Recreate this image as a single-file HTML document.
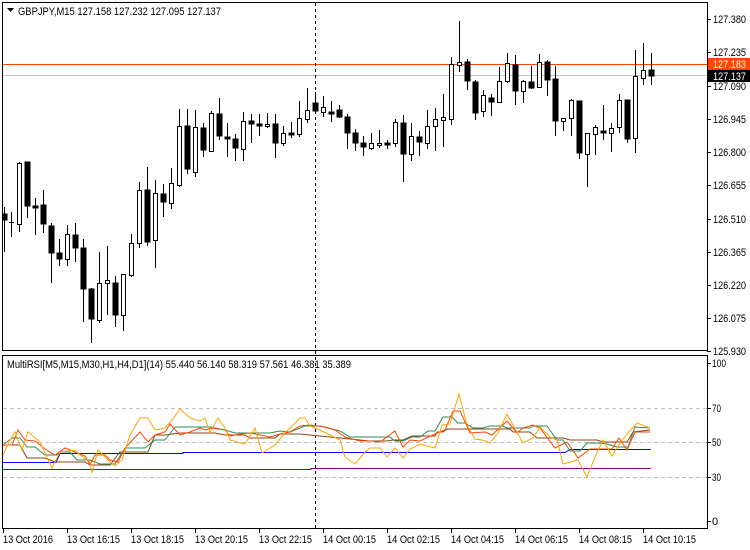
<!DOCTYPE html>
<html><head><meta charset="utf-8"><style>
html,body{margin:0;padding:0;background:#fff;width:750px;height:550px;overflow:hidden}
svg{display:block}
text{font-family:"Liberation Sans",sans-serif;font-size:11px;fill:#000}
</style></head><body>
<svg width="750" height="550" viewBox="0 0 750 550" xmlns="http://www.w3.org/2000/svg">
<rect width="750" height="550" fill="#fff"/>
<g fill="none" stroke="#000" shape-rendering="crispEdges">
<rect x="2.5" y="2.5" width="705" height="348"/>
<rect x="2.5" y="355.5" width="705" height="173"/>
</g>
<line x1="3" y1="64.5" x2="707" y2="64.5" stroke="#ff4500" shape-rendering="crispEdges"/>
<line x1="3" y1="75.5" x2="707" y2="75.5" stroke="#c0c0c0" shape-rendering="crispEdges"/>
<g stroke="#000" stroke-width="1" shape-rendering="crispEdges">
<line x1="4.5" y1="207" x2="4.5" y2="252"/><rect x="3" y="214" width="4" height="6" fill="#000"/>
<line x1="11.5" y1="212" x2="11.5" y2="237"/><line x1="9" y1="222.5" x2="14" y2="222.5"/>
<line x1="19.5" y1="162" x2="19.5" y2="232"/><rect x="17.5" y="163.5" width="4" height="61" fill="#fff"/>
<line x1="27.5" y1="162" x2="27.5" y2="218"/><rect x="25" y="162" width="5" height="44" fill="#000"/>
<line x1="35.5" y1="198" x2="35.5" y2="235"/><rect x="33" y="206" width="5" height="2" fill="#000"/>
<line x1="43.5" y1="190" x2="43.5" y2="233"/><rect x="41" y="205" width="5" height="19" fill="#000"/>
<line x1="51.5" y1="223" x2="51.5" y2="283"/><rect x="49" y="226" width="5" height="27" fill="#000"/>
<line x1="59.5" y1="239" x2="59.5" y2="266"/><rect x="57" y="253" width="5" height="6" fill="#000"/>
<line x1="67.5" y1="225" x2="67.5" y2="266"/><rect x="65.5" y="234.5" width="4" height="25" fill="#fff"/>
<line x1="75.5" y1="223" x2="75.5" y2="262"/><rect x="73" y="235" width="5" height="13" fill="#000"/>
<line x1="83.5" y1="239" x2="83.5" y2="322"/><rect x="81" y="248" width="5" height="41" fill="#000"/>
<line x1="91.5" y1="288" x2="91.5" y2="343"/><rect x="89" y="289" width="5" height="30" fill="#000"/>
<line x1="99.5" y1="252" x2="99.5" y2="323"/><rect x="97.5" y="283.5" width="4" height="37" fill="#fff"/>
<line x1="107.5" y1="246" x2="107.5" y2="315"/><rect x="105.5" y="280.5" width="4" height="3" fill="#fff"/>
<line x1="115.5" y1="276" x2="115.5" y2="327"/><rect x="113" y="283" width="5" height="32" fill="#000"/>
<line x1="123.5" y1="274" x2="123.5" y2="331"/><rect x="121.5" y="274.5" width="4" height="41" fill="#fff"/>
<line x1="131.5" y1="234" x2="131.5" y2="277"/><rect x="129.5" y="243.5" width="4" height="32" fill="#fff"/>
<line x1="139.5" y1="182" x2="139.5" y2="248"/><rect x="137.5" y="190.5" width="4" height="53" fill="#fff"/>
<line x1="147.5" y1="167" x2="147.5" y2="246"/><rect x="145" y="190" width="5" height="52" fill="#000"/>
<line x1="155.5" y1="180" x2="155.5" y2="268"/><rect x="153.5" y="193.5" width="4" height="47" fill="#fff"/>
<line x1="163.5" y1="184" x2="163.5" y2="217"/><rect x="161" y="194" width="5" height="8" fill="#000"/>
<line x1="171.5" y1="168" x2="171.5" y2="209"/><rect x="169.5" y="183.5" width="4" height="20" fill="#fff"/>
<line x1="179.5" y1="109" x2="179.5" y2="187"/><rect x="177.5" y="126.5" width="4" height="59" fill="#fff"/>
<line x1="187.5" y1="109" x2="187.5" y2="174"/><rect x="185" y="126" width="5" height="43" fill="#000"/>
<line x1="195.5" y1="110" x2="195.5" y2="177"/><rect x="193.5" y="127.5" width="4" height="45" fill="#fff"/>
<line x1="203.5" y1="123" x2="203.5" y2="157"/><rect x="201" y="128" width="5" height="22" fill="#000"/>
<line x1="211.5" y1="111" x2="211.5" y2="151"/><rect x="209.5" y="113.5" width="4" height="38" fill="#fff"/>
<line x1="219.5" y1="98" x2="219.5" y2="140"/><rect x="217" y="114" width="5" height="22" fill="#000"/>
<line x1="227.5" y1="123" x2="227.5" y2="157"/><rect x="225" y="137" width="5" height="2" fill="#000"/>
<line x1="235.5" y1="134" x2="235.5" y2="161"/><rect x="233" y="139" width="5" height="9" fill="#000"/>
<line x1="243.5" y1="112" x2="243.5" y2="161"/><rect x="241.5" y="121.5" width="4" height="28" fill="#fff"/>
<line x1="251.5" y1="114" x2="251.5" y2="143"/><rect x="249" y="121" width="5" height="3" fill="#000"/>
<line x1="259.5" y1="114" x2="259.5" y2="136"/><rect x="257" y="124" width="5" height="2" fill="#000"/>
<line x1="267.5" y1="113" x2="267.5" y2="128"/><rect x="265.5" y="124.5" width="4" height="2" fill="#fff"/>
<line x1="275.5" y1="114" x2="275.5" y2="158"/><rect x="273" y="124" width="5" height="19" fill="#000"/>
<line x1="283.5" y1="126" x2="283.5" y2="146"/><rect x="281.5" y="133.5" width="4" height="10" fill="#fff"/>
<line x1="291.5" y1="122" x2="291.5" y2="138"/><rect x="289" y="133" width="5" height="2" fill="#000"/>
<line x1="299.5" y1="101" x2="299.5" y2="137"/><rect x="297.5" y="118.5" width="4" height="16" fill="#fff"/>
<line x1="307.5" y1="88" x2="307.5" y2="123"/><rect x="305.5" y="110.5" width="4" height="9" fill="#fff"/>
<line x1="315.5" y1="92" x2="315.5" y2="111"/><rect x="313" y="103" width="5" height="8" fill="#000"/>
<line x1="323.5" y1="96" x2="323.5" y2="117"/><rect x="321.5" y="107.5" width="4" height="5" fill="#fff"/>
<line x1="331.5" y1="101" x2="331.5" y2="122"/><rect x="329" y="112" width="5" height="2" fill="#000"/>
<line x1="339.5" y1="105" x2="339.5" y2="118"/><rect x="337" y="110" width="5" height="7" fill="#000"/>
<line x1="347.5" y1="114" x2="347.5" y2="149"/><rect x="345" y="117" width="5" height="16" fill="#000"/>
<line x1="355.5" y1="129" x2="355.5" y2="151"/><rect x="353" y="133" width="5" height="10" fill="#000"/>
<line x1="363.5" y1="136" x2="363.5" y2="156"/><rect x="361" y="143" width="5" height="4" fill="#000"/>
<line x1="371.5" y1="133" x2="371.5" y2="150"/><rect x="369.5" y="143.5" width="4" height="5" fill="#fff"/>
<line x1="379.5" y1="130" x2="379.5" y2="148"/><rect x="377.5" y="143.5" width="4" height="2" fill="#fff"/>
<line x1="387.5" y1="140" x2="387.5" y2="149"/><rect x="385" y="143" width="5" height="2" fill="#000"/>
<line x1="395.5" y1="119" x2="395.5" y2="147"/><rect x="393.5" y="122.5" width="4" height="21" fill="#fff"/>
<line x1="403.5" y1="115" x2="403.5" y2="182"/><rect x="401" y="123" width="5" height="31" fill="#000"/>
<line x1="411.5" y1="123" x2="411.5" y2="161"/><rect x="409.5" y="136.5" width="4" height="18" fill="#fff"/>
<line x1="419.5" y1="131" x2="419.5" y2="156"/><rect x="417" y="137" width="5" height="5" fill="#000"/>
<line x1="427.5" y1="110" x2="427.5" y2="149"/><rect x="425.5" y="126.5" width="4" height="17" fill="#fff"/>
<line x1="435.5" y1="108" x2="435.5" y2="151"/><rect x="433.5" y="119.5" width="4" height="7" fill="#fff"/>
<line x1="443.5" y1="94" x2="443.5" y2="147"/><rect x="441.5" y="117.5" width="4" height="3" fill="#fff"/>
<line x1="451.5" y1="57" x2="451.5" y2="125"/><rect x="449.5" y="64.5" width="4" height="55" fill="#fff"/>
<line x1="459.5" y1="21" x2="459.5" y2="72"/><rect x="457.5" y="62.5" width="4" height="3" fill="#fff"/>
<line x1="467.5" y1="59" x2="467.5" y2="90"/><rect x="465" y="62" width="5" height="19" fill="#000"/>
<line x1="475.5" y1="80" x2="475.5" y2="120"/><rect x="473" y="82" width="5" height="31" fill="#000"/>
<line x1="483.5" y1="90" x2="483.5" y2="117"/><rect x="481.5" y="95.5" width="4" height="16" fill="#fff"/>
<line x1="491.5" y1="94" x2="491.5" y2="116"/><rect x="489" y="98" width="5" height="4" fill="#000"/>
<line x1="499.5" y1="67" x2="499.5" y2="102"/><rect x="497.5" y="81.5" width="4" height="21" fill="#fff"/>
<line x1="507.5" y1="53" x2="507.5" y2="83"/><rect x="505.5" y="63.5" width="4" height="18" fill="#fff"/>
<line x1="515.5" y1="55" x2="515.5" y2="105"/><rect x="513" y="65" width="5" height="26" fill="#000"/>
<line x1="523.5" y1="80" x2="523.5" y2="103"/><rect x="521.5" y="81.5" width="4" height="10" fill="#fff"/>
<line x1="531.5" y1="66" x2="531.5" y2="89"/><rect x="529" y="82" width="5" height="6" fill="#000"/>
<line x1="539.5" y1="54" x2="539.5" y2="87"/><rect x="537.5" y="62.5" width="4" height="25" fill="#fff"/>
<line x1="547.5" y1="60" x2="547.5" y2="96"/><rect x="545" y="62" width="5" height="18" fill="#000"/>
<line x1="555.5" y1="66" x2="555.5" y2="136"/><rect x="553" y="79" width="5" height="42" fill="#000"/>
<line x1="563.5" y1="118" x2="563.5" y2="131"/><rect x="561.5" y="118.5" width="4" height="3" fill="#fff"/>
<line x1="571.5" y1="99" x2="571.5" y2="136"/><rect x="569.5" y="100.5" width="4" height="18" fill="#fff"/>
<line x1="579.5" y1="101" x2="579.5" y2="159"/><rect x="577" y="101" width="5" height="52" fill="#000"/>
<line x1="587.5" y1="133" x2="587.5" y2="187"/><rect x="585.5" y="133.5" width="4" height="21" fill="#fff"/>
<line x1="595.5" y1="125" x2="595.5" y2="155"/><rect x="593.5" y="127.5" width="4" height="7" fill="#fff"/>
<line x1="603.5" y1="105" x2="603.5" y2="140"/><rect x="601" y="131" width="5" height="2" fill="#000"/>
<line x1="611.5" y1="123" x2="611.5" y2="152"/><rect x="609.5" y="128.5" width="4" height="5" fill="#fff"/>
<line x1="619.5" y1="94" x2="619.5" y2="133"/><rect x="617.5" y="100.5" width="4" height="27" fill="#fff"/>
<line x1="627.5" y1="100" x2="627.5" y2="143"/><rect x="625" y="100" width="5" height="39" fill="#000"/>
<line x1="635.5" y1="50" x2="635.5" y2="153"/><rect x="633.5" y="76.5" width="4" height="62" fill="#fff"/>
<line x1="643.5" y1="43" x2="643.5" y2="85"/><rect x="641.5" y="70.5" width="4" height="8" fill="#fff"/>
<line x1="651.5" y1="53" x2="651.5" y2="85"/><rect x="649" y="70" width="5" height="6" fill="#000"/>
</g>
<line x1="315.5" y1="3" x2="315.5" y2="528" stroke="#000" stroke-dasharray="3,3" shape-rendering="crispEdges"/>
<polygon points="7,8 14,8 10.5,12" fill="#000"/>
<text x="18" y="15" textLength="203" lengthAdjust="spacingAndGlyphs">GBPJPY,M15  127.158 127.232 127.095 127.137</text>
<g stroke="#000" shape-rendering="crispEdges">
<line x1="707" y1="19.5" x2="711" y2="19.5"/><line x1="707" y1="52.5" x2="711" y2="52.5"/><line x1="707" y1="86.5" x2="711" y2="86.5"/><line x1="707" y1="119.5" x2="711" y2="119.5"/><line x1="707" y1="152.5" x2="711" y2="152.5"/><line x1="707" y1="185.5" x2="711" y2="185.5"/><line x1="707" y1="219.5" x2="711" y2="219.5"/><line x1="707" y1="252.5" x2="711" y2="252.5"/><line x1="707" y1="285.5" x2="711" y2="285.5"/><line x1="707" y1="318.5" x2="711" y2="318.5"/><line x1="707" y1="351.5" x2="711" y2="351.5"/>
</g>
<g>
<text x="713" y="23" textLength="33" lengthAdjust="spacingAndGlyphs">127.380</text><text x="713" y="56" textLength="33" lengthAdjust="spacingAndGlyphs">127.235</text><text x="713" y="90" textLength="33" lengthAdjust="spacingAndGlyphs">127.090</text><text x="713" y="123" textLength="33" lengthAdjust="spacingAndGlyphs">126.945</text><text x="713" y="156" textLength="33" lengthAdjust="spacingAndGlyphs">126.800</text><text x="713" y="189" textLength="33" lengthAdjust="spacingAndGlyphs">126.655</text><text x="713" y="223" textLength="33" lengthAdjust="spacingAndGlyphs">126.510</text><text x="713" y="256" textLength="33" lengthAdjust="spacingAndGlyphs">126.365</text><text x="713" y="289" textLength="33" lengthAdjust="spacingAndGlyphs">126.220</text><text x="713" y="322" textLength="33" lengthAdjust="spacingAndGlyphs">126.075</text><text x="713" y="355" textLength="33" lengthAdjust="spacingAndGlyphs">125.930</text>
</g>
<rect x="708" y="58" width="42" height="12" fill="#ff4500"/>
<text x="713" y="68" style="fill:#fff" textLength="33" lengthAdjust="spacingAndGlyphs">127.183</text>
<rect x="708" y="70" width="42" height="12" fill="#000"/>
<text x="713" y="80" style="fill:#fff" textLength="33" lengthAdjust="spacingAndGlyphs">127.137</text>
<text x="7" y="368" textLength="344" lengthAdjust="spacingAndGlyphs">MultiRSI[M5,M15,M30,H1,H4,D1](14) 55.440 56.140 58.319 57.561 46.381 35.389</text>
<g stroke="#c0c0c0" stroke-dasharray="4,3" shape-rendering="crispEdges">
<line x1="3" y1="408.5" x2="707" y2="408.5"/><line x1="3" y1="442.5" x2="707" y2="442.5"/><line x1="3" y1="477.5" x2="707" y2="477.5"/>
</g>
<g stroke="#000" shape-rendering="crispEdges">
<line x1="707" y1="363.5" x2="711" y2="363.5"/><line x1="707" y1="408.5" x2="711" y2="408.5"/><line x1="707" y1="442.5" x2="711" y2="442.5"/><line x1="707" y1="477.5" x2="711" y2="477.5"/><line x1="707" y1="521.5" x2="711" y2="521.5"/>
</g>
<text x="712" y="367" textLength="14" lengthAdjust="spacingAndGlyphs">100</text><text x="712" y="412" textLength="9" lengthAdjust="spacingAndGlyphs">70</text><text x="712" y="446" textLength="9" lengthAdjust="spacingAndGlyphs">50</text><text x="712" y="481" textLength="9" lengthAdjust="spacingAndGlyphs">30</text><text x="712" y="525">0</text>
<g fill="none" stroke-width="1">
<polyline stroke="#800080" points="3,469.5 311,469.5 311,468.5 651,468.5"/>
<polyline stroke="#0000ff" points="3,462.5 56,462.5 60,453.5 183,453.5 183,452.5 565,452.5 570,449.5 651,449.5"/>
<polyline stroke="#8b4513" points="3,445 20,445 27,458 45,458 55,462 85,462 90,465 110,465 120,452 148,452 155,435 165,435 180,433 215,433 225,435 245,435 250,438 275,438 280,434 300,434 310,435 350,439 370,441 387,441 393,440 403,440 412,436 435,436 437,432 443,432 447,429 510,429 513,432 530,432 537,438 563,438 570,440 597,440 603,442 627,442 633,432 650,430"/>
<polyline stroke="#2e8b57" points="3,445 12,438 20,438 27,447 35,447 45,455 57,455 60,452 70,452 77,460 90,460 100,464 115,464 125,448 145,448 155,440 165,440 175,427 210,427 225,430 235,433 270,433 280,431 290,432 305,426 320,426 340,431 350,437 390,437 395,441 403,441 412,437 420,437 428,431 435,431 443,417 452,417 458,423 465,423 473,428 483,428 490,426 503,426 507,428 530,428 533,426 547,426 557,440 563,440 570,451 580,451 587,443 600,443 607,444 617,447 628,447 635,427 650,428"/>
<polyline stroke="#ff4500" points="3,445 12,445 18,430 25,440 35,441 45,449 55,455 65,448 75,452 85,456 90,465 95,455 105,455 110,460 118,462 125,448 140,432 148,442 155,435 165,432 170,424 180,435 190,432 200,428 205,430 212,428 225,430 230,436 240,434 250,433 270,437 280,434 290,432 300,426 310,425 325,427 335,430 345,437 360,441 370,441 380,442 395,431 403,447 410,440 420,441 437,433 445,430 453,411 460,411 470,433 485,432 492,435 507,421 517,433 523,428 533,425 540,428 555,448 567,442 578,458 590,449 612,449 619,438 627,450 635,432 650,432"/>
<polyline stroke="#ffa500" points="3,455 10,440 15,432 22,450 28,432 40,442 52,468 60,452 75,450 80,455 90,462 92,473 98,450 108,460 115,466 122,460 130,435 140,418 148,418 155,430 165,428 172,420 180,409 190,418 200,421 205,418 210,432 218,418 225,428 230,440 245,444 255,428 262,453 275,445 285,433 292,426 300,418 305,418 310,426 320,430 330,435 340,440 345,457 355,464 365,452 370,448 380,448 387,457 395,448 403,458 410,449 420,444 435,448 442,425 450,424 459,394 467,425 475,439 482,440 490,443 498,433 507,414 513,425 523,443 533,438 540,427 550,437 557,440 563,464 578,460 587,477 595,457 603,440 612,456 620,443 628,433 637,423 650,428"/>
</g>
<g stroke="#000" shape-rendering="crispEdges">
<line x1="3.5" y1="529" x2="3.5" y2="533"/><line x1="67.5" y1="529" x2="67.5" y2="533"/><line x1="131.5" y1="529" x2="131.5" y2="533"/><line x1="195.5" y1="529" x2="195.5" y2="533"/><line x1="259.5" y1="529" x2="259.5" y2="533"/><line x1="323.5" y1="529" x2="323.5" y2="533"/><line x1="387.5" y1="529" x2="387.5" y2="533"/><line x1="451.5" y1="529" x2="451.5" y2="533"/><line x1="515.5" y1="529" x2="515.5" y2="533"/><line x1="579.5" y1="529" x2="579.5" y2="533"/><line x1="643.5" y1="529" x2="643.5" y2="533"/>
</g>
<g>
<text x="3" y="543" textLength="50" lengthAdjust="spacingAndGlyphs">13 Oct 2016</text><text x="67" y="543" textLength="53" lengthAdjust="spacingAndGlyphs">13 Oct 16:15</text><text x="131" y="543" textLength="53" lengthAdjust="spacingAndGlyphs">13 Oct 18:15</text><text x="195" y="543" textLength="53" lengthAdjust="spacingAndGlyphs">13 Oct 20:15</text><text x="259" y="543" textLength="53" lengthAdjust="spacingAndGlyphs">13 Oct 22:15</text><text x="323" y="543" textLength="53" lengthAdjust="spacingAndGlyphs">14 Oct 00:15</text><text x="387" y="543" textLength="53" lengthAdjust="spacingAndGlyphs">14 Oct 02:15</text><text x="451" y="543" textLength="53" lengthAdjust="spacingAndGlyphs">14 Oct 04:15</text><text x="515" y="543" textLength="53" lengthAdjust="spacingAndGlyphs">14 Oct 06:15</text><text x="579" y="543" textLength="53" lengthAdjust="spacingAndGlyphs">14 Oct 08:15</text><text x="643" y="543" textLength="53" lengthAdjust="spacingAndGlyphs">14 Oct 10:15</text>
</g>
</svg>
</body></html>
